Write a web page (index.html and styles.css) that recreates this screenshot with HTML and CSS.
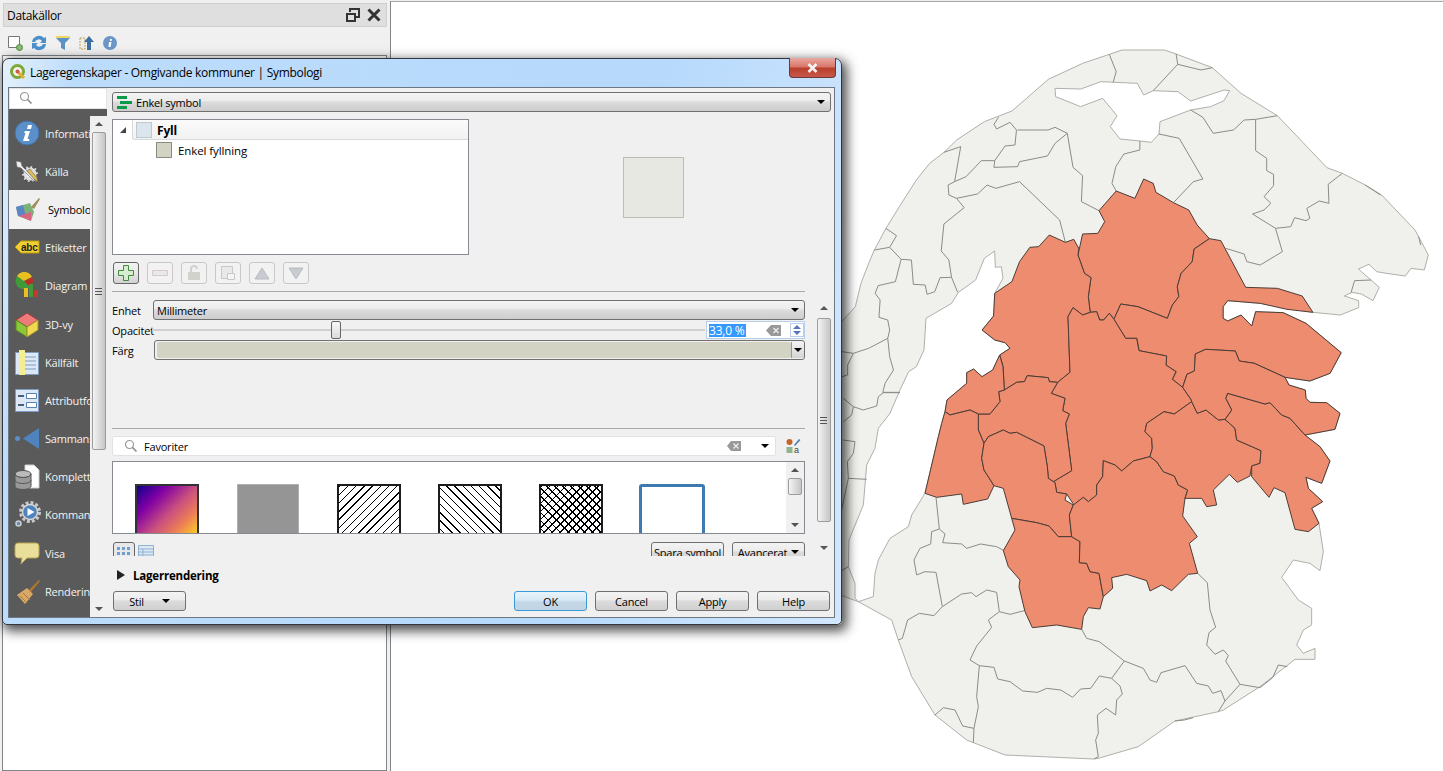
FILE: index.html
```html
<!DOCTYPE html>
<html lang="sv">
<head>
    <meta charset="UTF-8">
    <title>Lageregenskaper - Omgivande kommuner | Symbologi</title>
    <link rel="stylesheet" href="styles.css">
</head>
<body>

    <aside class="panel">
        <div class="panel-head">
            <span>Datakällor</span>
            <span class="panel-actions">
                <svg width="14" height="14" viewBox="0 0 14 14"><path d="M1 6h8v7H1zM1 6V8M4 4V1h9v8h-3" fill="none" stroke="#333" stroke-width="2"/></svg>
                <svg width="14" height="14" viewBox="0 0 14 14"><path d="M1.500 1.500l11 11M12.500 1.500l-11 11" stroke="#333" stroke-width="3"/></svg>
            </span>
        </div>
        <div class="panel-tools">
            <svg width="15" height="17" viewBox="0 0 15 17"><path d="M.5 2.500h11v11H.5z" fill="#fff" stroke="#777"/><circle cx="11.500" cy="13.500" r="3" fill="#8dbb78" stroke="#4c8a3c"/></svg>
            <svg width="16" height="16" viewBox="0 0 16 16"><path d="M1 7a7 7 0 0 1 12-4l2-1v6H9l2-2a4 4 0 0 0-7 1zM15 9a7 7 0 0 1-12 4l-2 1V8h6L5 10a4 4 0 0 0 7-1z" fill="#4b8fcb"/></svg>
            <svg width="16" height="16" viewBox="0 0 16 16"><path d="M1 1h14v2l-5 5v7l-4-2V8L1 3z" fill="#5d93c4"/><path d="M1 1h14v2H1z" fill="#f0d860"/></svg>
            <svg width="16" height="16" viewBox="0 0 16 16"><path d="M1 3h5v11H1z" fill="#eee" stroke="#c9a050" stroke-dasharray="2 1"/><path d="M10 1l5 6h-3v8H8V7H5z" fill="#3f6f9f"/></svg>
            <svg width="14" height="14" viewBox="0 0 14 14"><circle cx="7" cy="7" r="7" fill="#6a97c8"/><path d="M7 3h2L8.500 5H7zM6 6h2.500L7.500 11H5.500z" fill="#fff"/></svg>
        </div>
        <div class="panel-tree"></div>
    </aside>

    <main class="canvas">
        <svg class="map" width="1052" height="769" viewBox="391 2 1052 769">
            <g transform="translate(840 390) scale(.33333)">
                <path class="land" fill-rule="evenodd" d="M0-200 46-250 63-320 86-380 103-420 138-485 178-550 229-630 269-680 312-713 350-750 433-805 516-837 625-932 728-980 808-1007 846-1020 974-1020 1008-1008 1117-967 1203-890 1312-823 1461-667 1507-650 1576-615 1625-585 1725-480 1765-405 1753-360 1713-365 1696-342 1639-350 1610-355 1587-377 1555-363 1593-330 1618-308 1599-268 1564-288 1536-293 1513-282 1556-268 1556-247 1501-225 1419-233 1261-260 1163-268 1149-250 1149-215 1163-207 1203-225 1235-192 1247-235 1330-232 1398-200 1504-112 1470-50 1410-27 1335-38 1347-15 1396 0 1398 25 1410 37 1460 38 1500 70 1485 118 1395 135 1440 170 1470 213 1445 280 1398 262 1405 295 1448 335 1415 355 1437 400 1450 485 1440 542 1410 520 1360 510 1325 562 1375 630 1415 655 1415 705 1390 720 1370 765 1390 790 1425 775 1425 808 1365 808 1260 890 1150 960 1135 965 1005 993 895 1070 775 1105 760 1107 495 1095 380 1050 285 975 215 860 175 750 155 690 55 635 100 620 105 550 115 510 150 445 205 410 215 375 255 310 295 140 305 100 315 65 321 30 380-20 380-52 401-63 426-40 458-60 479-105 510-125 495-142 464-150 426-180 461-222 464-290 489-335 484-370 466-368 464-417 433-395 407-330 355-293 335-260 258-215 252-120 229-70 206-55 180 0 150 70 115 115 105 175 80 225 70 345 27 450 25 530 45 580 45 625 55 635 0 615zM645-905 722-903 783-925 892-920 911-885 940-898 1014-895 1052-867 1152-900 1169-898 1152-868 1112-850 1052-840 960-805 957-768 934-743 900-747 840-753 811-790 831-823 788-875 722-850 647-880z"/>

                <g class="borders">
                    <polyline points="180,8 130,8 115,20 110,48 70,60 40,50 10,25"/>
                    <polyline points="40,50 35,75 10,95"/>
                    <polyline points="10,150 45,155 40,190 22,215 25,265 5,360"/>
                    <polyline points="25,265 80,268"/>
                    <polyline points="0,545 25,530"/>
                    <polyline points="288,322 298,417 275,425 272,462 240,475 222,510 230,555 255,545 288,547 307,650"/>
                    <polyline points="298,417 315,432 308,458 365,462 380,475 422,462 470,470 492,482"/>
                    <polyline points="307,650 365,612 395,608 408,620 440,600 470,607 478,665 510,673 553,662"/>
                    <polyline points="307,650 282,677 238,670 203,690 187,745 175,750"/>
                    <polyline points="478,665 445,690 455,712 410,768 390,810 418,827 462,832 473,867 510,875 548,903 593,907 620,895 662,900 698,922 722,897 752,895 778,858 815,865 853,813"/>
                    <polyline points="725,718 740,745 778,755 853,813 910,835 930,870 950,877 963,848 1035,827 1070,880 1105,888 1118,910 1143,902 1155,933 1135,965"/>
                    <polyline points="815,865 840,888 847,912 830,930 827,975 798,955 772,975 775,1030 767,1050 775,1100 762,1107"/>
                    <polyline points="418,827 410,920 415,950 402,1015 400,1058"/>
                    <polyline points="402,1015 368,1008 345,960 310,953 285,975"/>
                    <polyline points="1073,550 1102,578 1110,660 1127,712 1107,728 1100,765 1125,793 1150,780 1165,797 1157,813 1200,883 1155,933"/>
                    <polyline points="1200,883 1260,893 1298,863 1315,825 1342,830"/>
                    <polyline points="1005,993 1033,990 1060,983"/>
                </g>

                <g transform="scale(1.146 1) translate(0 -1080)">
                    <g class="borders">
                        <polyline points="705,73 723,125 715,157"/>
                        <polyline points="880,72 884,103 820,182"/>
                        <polyline points="884,103 945,120 975,113"/>
                        <polyline points="918,240 950,262 977,310 1030,300 1058,270 1088,268 1145,257"/>
                        <polyline points="1088,268 1088,362 1117,385 1117,422 1135,433 1135,467 1110,500 1128,520 1110,540 1080,552 1140,595 1158,665 1100,705 1065,695 1058,672 1010,655"/>
                        <polyline points="1140,595 1180,590 1190,563 1220,572 1230,565 1222,535 1255,513 1280,520 1278,463 1315,430"/>
                        <polyline points="1375,465 1415,495"/>
                        <polyline points="1515,620 1520,645"/>
                        <polyline points="1338,787 1347,752 1390,750"/>
                        <polyline points="835,312 888,325 950,447 925,455 873,518"/>
                        <polyline points="785,333 785,360 743,372 722,410 712,460 723,483"/>
                        <polyline points="415,262 403,283 410,297 445,277 462,300 458,345 432,348 405,392 403,412 465,410 470,395 543,378 563,340 595,310 563,292 545,300 465,300"/>
                        <polyline points="595,310 610,412 635,437 632,515 678,542"/>
                        <polyline points="405,392 370,392 330,440 300,455 316,350 272,367"/>
                        <polyline points="300,455 283,465 285,495 305,505 360,492 385,465 408,475 470,455 575,570 590,637"/>
                        <polyline points="305,505 325,533 272,582 265,663 285,690 292,742 308,787"/>
                        <polyline points="292,742 262,743 248,785 228,793 223,765 192,763 187,690 160,688 130,652 90,660"/>
                        <polyline points="120,595 148,617 130,652"/>
                        <polyline points="160,688 145,755 100,767 92,790 105,810 102,862 125,870 130,900 125,925 75,955 35,970 5,965"/>
                        <polyline points="125,925 130,980 140,1020 118,1060 112,1087 155,1087"/>
                        <polyline points="35,970 20,1005 20,1035 5,1040"/>
                    </g>
                    <g class="selected">
                        <polygon points="723,483 772,505 795,447 820,460 827,487 873,518 913,540 935,585 967,626 927,657 922,695 893,730 883,770 887,800 870,825 857,865 780,830 735,822 717,868 705,850 690,870 680,870 672,845 655,847 650,800 657,743 640,730 623,675 635,612 675,610 693,575 678,542"/>
                        <polygon points="405,790 450,755 470,695 497,652 520,650 548,615 590,637 612,628 625,655 623,675 640,730 657,743 650,800 655,847 635,855 610,833 597,860 602,1027 570,1057 548,1055 545,1043 490,1037 483,1055 462,1057 430,1080 427,1010 418,975 445,955 432,938 405,930 372,900 402,858"/>
                        <polygon points="967,626 997,632 1062,772 1145,775 1210,798 1238,847 1170,838 1100,820 1015,812 1003,830 1003,865 1015,873 1050,855 1078,888 1088,845 1160,848 1220,880 1312,968 1283,1030 1230,1053 1165,1042 1085,1000 1045,993 1035,963 957,958 930,972 928,1023 908,1033 897,1072 870,1048 880,1025 853,1005 855,978 783,962 777,925 748,925 717,868 735,822 780,830 857,865 870,825 887,800 883,770 893,730 922,695 927,657"/>
                    </g>
                </g>

                <g class="selected">
                    <polygon points="684,-220 699,-247 728,-225 751,-233 770,-235 779,-210 791,-210 808,-230 822,-212 857,-155 890,-155 897,-118 980,-102 978,-75 1008,-55 997,-32 1028,-8 1054,30 1055,35 1003,72 972,65 920,100 915,125 935,145 937,175 930,200 880,213 845,243 825,225 790,212 788,260 770,285 770,315 745,335 730,322 702,345 680,312 650,307 645,278 640,275 695,242 677,100 688,72 668,62 675,25 634,10 653,-23 690,-53"/>
                    <polygon points="493,0 530,-23 553,-25 562,-43 625,-37 628,-25 653,-23 634,10 675,25 668,62 688,72 677,100 695,242 640,275 625,265 622,230 612,168 530,127 510,130 490,120 445,140 432,160 415,120 415,72 450,72 480,35 476,5"/>
                    <polygon points="315,65 330,75 390,60 415,72 450,72 480,35 476,5 493,0 489,-70 479,-105 458,-60 426,-40 401,-63 380,-52 380,-20 321,30"/>
                    <polygon points="255,310 290,322 365,312 370,343 443,327 462,287 432,240 425,205 432,160 415,120 415,72 390,60 330,75 315,65 305,100 295,140"/>
                    <polygon points="432,160 445,140 490,120 510,130 530,127 612,168 622,230 625,265 640,275 645,278 650,307 680,312 675,330 700,345 688,375 695,440 655,440 627,408 590,398 515,385 490,295 462,287 432,240 425,205"/>
                    <polygon points="515,385 590,398 627,408 655,440 695,440 720,455 718,518 740,520 750,545 777,550 790,620 780,657 745,653 730,680 725,718 650,705 577,713 555,665 537,590 540,570 505,530 490,482 525,420"/>
                    <polygon points="700,345 730,322 745,335 770,315 770,285 788,260 790,212 825,225 845,243 880,213 930,200 950,215 970,245 1003,258 1015,285 1043,300 1035,325 1028,378 1072,440 1048,460 1073,550 1045,553 995,602 965,585 930,603 920,572 860,553 815,563 818,595 790,620 777,550 750,545 740,520 718,518 720,455 695,440 688,375"/>
                    <polygon points="1055,35 1072,70 1098,60 1135,90 1155,88 1185,115 1190,150 1263,182 1260,220 1235,228 1230,258 1192,277 1168,253 1120,300 1130,345 1100,350 1085,325 1035,325 1043,300 1015,285 1003,258 970,245 950,215 930,200 937,175 935,145 915,125 920,100 972,65 1003,72"/>
                    <polygon points="1155,88 1175,60 1157,25 1163,10 1275,42 1290,38 1325,75 1350,85 1395,135 1440,170 1470,213 1445,280 1398,262 1405,295 1448,335 1415,355 1437,400 1405,425 1365,418 1335,308 1302,293 1287,322 1235,260 1235,228 1260,220 1263,182 1190,150 1185,115"/>
                    <polygon points="1028,-8 1041,-47 1063,-57 1066,-108 1097,-122 1186,-117 1198,-87 1243,-80 1335,-38 1347,-15 1396,0 1398,25 1410,37 1460,38 1500,70 1485,118 1395,135 1350,85 1325,75 1290,38 1275,42 1163,10 1157,25 1175,60 1155,88 1135,90 1098,60 1072,70 1055,35 1054,30"/>
                </g>
            </g>
        </svg>
    </main>

    <div class="dialog">
        <div class="dialog-title">
            <svg width="18" height="18" viewBox="0 0 18 18"><circle cx="8.500" cy="8.500" r="6" fill="#f4f4e8" stroke="#7fa83c" stroke-width="3"/><path d="M9 9l6 6" stroke="#e0b030" stroke-width="3"/><circle cx="8.500" cy="8.500" r="2" fill="#d05a4a"/></svg>
            <span class="dialog-name">Lageregenskaper - Omgivande kommuner | Symbologi</span>
            <span class="close-btn">
                <svg width="11" height="10" viewBox="0 0 11 10"><path d="M1.500 1l8 8M9.500 1l-8 8" stroke="#f2f2f2" stroke-width="2.600"/></svg>
            </span>
        </div>

        <div class="dialog-body">
            <div class="side">
                <div class="side-search">
                    <svg width="14" height="14" viewBox="0 0 14 14"><circle cx="5.500" cy="5.500" r="4" fill="none" stroke="#999" stroke-width="1.200"/><path d="M8.500 8.500l4 4" stroke="#888" stroke-width="1.600"/></svg>
                </div>
                <div class="side-row">
                    <ul class="side-list">
                        <li>
                            <svg width="27" height="27" viewBox="0 0 27 27"><circle cx="13" cy="13" r="12" fill="#5b8fc9" stroke="#3e6fa5"/><path d="M14 5h4l-1 4h-4zM11 11h5l-2.500 8h2l-.5 2H9l2.500-8H10z" fill="#fff"/></svg>
                            <span>Information</span>
                        </li>
                        <li>
                            <svg width="27" height="27" viewBox="0 0 27 27"><circle cx="16" cy="16" r="8" fill="#ddd" stroke="#555" stroke-width="3" stroke-dasharray="3 2"/><circle cx="16" cy="16" r="4" fill="#eee"/><path d="M2 3l5 1 1 4 12 12 3 4-4-2L7 10l-4-1z" fill="#eee" stroke="#666" stroke-width=".6"/><path d="M13 13l8 9 3 2-1-4-7-9z" fill="#e0c050" stroke="#555" stroke-width=".6"/></svg>
                            <span>Källa</span>
                        </li>
                        <li class="is-active">
                            <svg width="27" height="27" viewBox="0 0 27 27"><path d="M2 11l14-4 4 9-3 9-13-5z" fill="#7cb27a"/><path d="M2 11l7-2 3 12-8-1z" fill="#5a86c8"/><path d="M5 20l12-4 0 9z" fill="#d8657f"/><path d="M17 11l8-9 1 1-6 10z" fill="#a08d5a"/></svg>
                            <span>Symbologi</span>
                        </li>
                        <li>
                            <svg width="27" height="27" viewBox="0 0 27 27"><path d="M1 13l6-6h18v12H7z" fill="#f0cf30" stroke="#b89a10"/><text x="7" y="17" class="abc">abc</text></svg>
                            <span>Etiketter</span>
                        </li>
                        <li>
                            <svg width="27" height="27" viewBox="0 0 27 27"><circle cx="10" cy="9" r="8.500" fill="#3f9a3a"/><path d="M10 9L3 4a8.500 8.500 0 0 1 15 1z" fill="#e8c020"/><path d="M10 9l8-4a8.500 8.500 0 0 1-2 10z" fill="#b8302a"/><path d="M10 16h4v9h-4z" fill="#e8c020"/><path d="M15 12h4v13h-4z" fill="#3f9a3a"/><path d="M20 18h4v7h-4z" fill="#c03a30"/></svg>
                            <span>Diagram</span>
                        </li>
                        <li>
                            <svg width="27" height="27" viewBox="0 0 27 27"><path d="M13 2l11 7-11 7-11-7z" fill="#ee7a7a" stroke="#a03a3a"/><path d="M2 9l11 7v10L2 19z" fill="#8cc83a" stroke="#5a8a20"/><path d="M24 9l-11 7v10l11-7z" fill="#f0d850" stroke="#a8922a"/></svg>
                            <span>3D-vy</span>
                        </li>
                        <li>
                            <svg width="27" height="27" viewBox="0 0 27 27"><path d="M1.500 3.500h23v22h-23z" fill="#dce8f5" stroke="#7f9dc0"/><path d="M11 8h11M11 12h11M11 16h11M11 20h11" stroke="#7f9dc0"/><path d="M5 1h6v25H5z" fill="#f5ee90"/></svg>
                            <span>Källfält</span>
                        </li>
                        <li>
                            <svg width="27" height="27" viewBox="0 0 27 27"><path d="M1.500 2.500h23v22h-23z" fill="#dce8f5" stroke="#7f9dc0"/><path d="M12.500 6.500h10v5h-10zM12.500 15.500h10v5h-10z" fill="#fff" stroke="#5a82b0"/><path d="M4 9h6M4 18h6" stroke="#4a5f78" stroke-width="2"/></svg>
                            <span>Attributformulär</span>
                        </li>
                        <li>
                            <svg width="27" height="27" viewBox="0 0 27 27"><circle cx="3.500" cy="13.500" r="2.500" fill="#5b8fc9"/><path d="M25 3v21L9 13.500z" fill="#4f83bd"/></svg>
                            <span>Sammanslagning</span>
                        </li>
                        <li>
                            <svg width="27" height="27" viewBox="0 0 27 27"><path d="M11 2h9l5 5v18H11z" fill="#fff" stroke="#ccc"/><ellipse cx="9" cy="11" rx="8" ry="3.500" fill="#bbb" stroke="#555"/><path d="M1 11v12c0 2 3.500 3.500 8 3.500s8-1.500 8-3.500V11c0 2-3.500 3.500-8 3.500S1 13 1 11z" fill="#999" stroke="#555"/><path d="M1 17c0 2 3.500 3.500 8 3.500s8-1.500 8-3.500" fill="none" stroke="#555"/></svg>
                            <span>Kompletterande</span>
                        </li>
                        <li>
                            <svg width="27" height="27" viewBox="0 0 27 27"><circle cx="16" cy="11" r="9.500" fill="none" stroke="#c8c8c8" stroke-width="3" stroke-dasharray="3 2"/><circle cx="16" cy="11" r="7.500" fill="#4f83bd" stroke="#d8d8d8" stroke-width="1.500"/><path d="M13.500 7l7 4-7 4z" fill="#fff"/><circle cx="4.500" cy="22.500" r="2.500" fill="#5b8fc9" stroke="#ccc" stroke-width="1.500"/></svg>
                            <span>Kommando</span>
                        </li>
                        <li>
                            <svg width="27" height="27" viewBox="0 0 27 27"><path d="M4 3h18q3 0 3 3v9q0 3-3 3H13l-6 6 1-6H4q-3 0-3-3V6q0-3 3-3z" fill="#eadf9a" stroke="#b8a650"/></svg>
                            <span>Visa</span>
                        </li>
                        <li>
                            <svg width="27" height="27" viewBox="0 0 27 27"><path d="M25 2L15 12l2 2L26 3z" fill="#b07a2a"/><path d="M3 17l10-7 6 6-8 10z" fill="#d8a868"/><path d="M6 18l7 7M9 15l7 7" stroke="#a87a3a"/></svg>
                            <span>Rendering</span>
                        </li>
                    </ul>
                    <div class="scroll side-scroll">
                        <i class="tick-up"></i>
                        <div class="thumb side-thumb"><b class="grip"></b></div>
                        <i class="tick-down"></i>
                    </div>
                </div>
            </div>

            <div class="main-col">
                <div class="combo renderer">
                    <svg width="17" height="15" viewBox="0 0 17 15"><path d="M1 1h10v3H1zM4 6h12v3H4zM1 11h10v3H1z" fill="#0a9a4a"/></svg>
                    <span>Enkel symbol</span>
                    <i class="arrow"></i>
                </div>

                <div class="symbol-row">
                    <div class="layer-tree">
                        <div class="tree-head">
                            <i class="twist"></i>
                            <div class="tree-bar">
                                <span class="tree-box tree-box-fyll"></span>
                                <strong>Fyll</strong>
                            </div>
                        </div>
                        <div class="tree-child">
                            <span class="tree-box tree-box-simple"></span>
                            <span>Enkel fyllning</span>
                        </div>
                    </div>
                    <div class="preview-wrap"><div class="preview"></div></div>
                </div>

                <div class="layer-tools">
                    <span class="tool on"><svg width="18" height="18" viewBox="0 0 18 18"><path d="M6.500 1.500h5v5h5v5h-5v5h-5v-5h-5v-5h5z" fill="#d8ecd0" stroke="#3f8a3f"/></svg></span>
                    <span class="tool"><svg width="18" height="8" viewBox="0 0 18 8"><path d="M1.500 1.500h15v5h-15z" fill="#e8e8e8" stroke="#d8c8c8"/></svg></span>
                    <span class="tool"><svg width="14" height="16" viewBox="0 0 14 16"><path d="M1 7h12v8H1z" fill="#d2d2cc"/><path d="M4 7V4a3 3 0 0 1 6 0" fill="none" stroke="#d2d2cc" stroke-width="2"/></svg></span>
                    <span class="tool"><svg width="14" height="14" viewBox="0 0 14 14"><path d="M.500.500h11v12h-11z" fill="#e8e8e8" stroke="#c8c8c8"/><path d="M6.500 7.500h7v6h-7z" fill="#f4f4f4" stroke="#c8c8c8"/></svg></span>
                    <span class="tool"><svg width="16" height="13" viewBox="0 0 16 13"><path d="M8 1l7 11H1z" fill="#c8ccd0" stroke="#b8bcc0"/></svg></span>
                    <span class="tool"><svg width="16" height="13" viewBox="0 0 16 13"><path d="M8 12L15 1H1z" fill="#c8ccd0" stroke="#b8bcc0"/></svg></span>
                </div>
                <div class="sep"></div>

                <div class="settings">
                    <div class="settings-inner">
                        <div class="form-grid">
                            <label>Enhet</label>
                            <div class="combo unit"><span>Millimeter</span><i class="arrow"></i></div>
                            <label>Opacitet</label>
                            <div class="opacity">
                                <div class="slider"><i class="slider-handle"></i></div>
                                <div class="spin">
                                    <span class="spin-text">33,0 %</span>
                                    <svg width="15" height="11" viewBox="0 0 15 11"><path d="M5 0h10v11H5L0 5.500z" fill="#999"/><path d="M7.500 3l5 5M12.500 3l-5 5" stroke="#eee" stroke-width="1.300"/></svg>
                                    <span class="spin-btns"><i class="up"></i><i class="down"></i></span>
                                </div>
                            </div>
                            <label>Färg</label>
                            <div class="color-btn"><span class="color-fill"></span><span class="color-drop"><i class="arrow"></i></span></div>
                        </div>

                        <div class="sep sep-lib"></div>

                        <div class="lib-search">
                            <div class="lib-field">
                                <svg width="14" height="14" viewBox="0 0 14 14"><circle cx="5.500" cy="5.500" r="4" fill="none" stroke="#999" stroke-width="1.200"/><path d="M8.500 8.500l4 4" stroke="#888" stroke-width="1.600"/></svg>
                                <span>Favoriter</span>
                                <svg class="lib-clear" width="14" height="10" viewBox="0 0 14 10"><path d="M4 0h10v10H4L0 5z" fill="#999"/><path d="M6.500 2.500l5 5M11.500 2.500l-5 5" stroke="#eee" stroke-width="1.300"/></svg>
                                <i class="arrow"></i>
                            </div>
                            <svg width="16" height="16" viewBox="0 0 16 16"><circle cx="4.500" cy="4" r="3" fill="#c8642a"/><path d="M1.500 9h6v6h-6z" fill="#8fb58f"/><path d="M9 7l5-6 1.500 1L10 8z" fill="#4a7fb0"/><text x="9" y="15" class="mini-a">a</text></svg>
                        </div>

                        <div class="lib-list">
                            <div class="tiles">
                                <div class="tile tile-grad"></div>
                                <div class="tile tile-grey"></div>
                                <div class="tile tile-hatch-a"></div>
                                <div class="tile tile-hatch-b"></div>
                                <div class="tile tile-cross"></div>
                                <div class="tile tile-outline"></div>
                            </div>
                            <div class="scroll lib-scroll">
                                <i class="tick-up"></i>
                                <div class="thumb lib-thumb"></div>
                                <i class="tick-down"></i>
                            </div>
                        </div>

                        <div class="lib-foot">
                            <span class="view-btn on"><svg width="16" height="12" viewBox="0 0 16 12"><path d="M1 1h3v3H1zM6 1h3v3H6zM11 1h3v3h-3zM1 6h3v3H1zM6 6h3v3H6zM11 6h3v3h-3z" fill="#6f9fd0"/></svg></span>
                            <span class="view-btn"><svg width="16" height="14" viewBox="0 0 16 14"><path d="M.500.500h15v13H.500z" fill="#dce8f5" stroke="#8fb0d0"/><path d="M1 4h14M1 7h14M1 10h14M5 4v9" stroke="#8fb0d0"/></svg></span>
                            <span class="foot-spacer"></span>
                            <span class="btn small">Spara symbol</span>
                            <span class="btn small">Avancerat <i class="arrow"></i></span>
                        </div>
                    </div>
                    <div class="scroll outer-scroll">
                        <i class="tick-up"></i>
                        <div class="thumb outer-thumb"><b class="grip"></b></div>
                        <i class="tick-down"></i>
                    </div>
                </div>

                <div class="rendering-row">
                    <i class="expand"></i>
                    <strong>Lagerrendering</strong>
                </div>

                <div class="footer">
                    <span class="btn stil">Stil <i class="arrow"></i></span>
                    <span class="foot-spacer"></span>
                    <span class="btn primary">OK</span>
                    <span class="btn">Cancel</span>
                    <span class="btn">Apply</span>
                    <span class="btn">Help</span>
                </div>
            </div>
        </div>
    </div>

</body>
</html>
```

FILE: styles.css
```css
* {
    margin: 0;
    padding: 0;
    box-sizing: border-box;
}

body {
    width: 1443px;
    height: 771px;
    overflow: hidden;
    position: relative;
    display: flex;
    background-color: #f0f0f0;
    font-family: "Open Sans", sans-serif;
    font-size: 11px;
    letter-spacing: -0.2px;
    color: #000;
}

/* left dock */
.panel {
    width: 387px;
    height: 771px;
    margin-left: 2px;
    display: flex;
    flex-direction: column;
}

.panel-head {
    width: 384px;
    height: 24px;
    margin-top: 3px;
    margin-left: 1px;
    padding: 0 5px 0 3px;
    display: flex;
    align-items: center;
    justify-content: space-between;
    background-color: #dfdfdf;
    border: 1px solid #cfcfcf;
    font-size: 12px;
    letter-spacing: -0.3px;
}

.panel-actions {
    display: flex;
    gap: 7px;
}

.panel-tools {
    height: 28px;
    padding: 3px 0 0 6px;
    display: flex;
    align-items: center;
    gap: 8px;
}

.panel-tree {
    flex: 1;
    width: 385px;
    background-color: #fff;
    border: 1px solid #7f8589;
}

/* map */
.canvas {
    flex: 1;
    margin: 1px 0 0 1px;
    background-color: #fff;
    border-top: 1px solid #a8a8a8;
    border-left: 1px solid #7f8589;
}

.map {
    display: block;
}

.land {
    fill: #f0f1ec;
    stroke: #aeb0aa;
    stroke-width: 1;
    vector-effect: non-scaling-stroke;
}

.borders polyline {
    fill: none;
    stroke: #8a8c86;
    stroke-width: 1;
    vector-effect: non-scaling-stroke;
}

.selected polygon {
    fill: #ed8c6e;
    stroke: #4d3c36;
    stroke-width: 1;
    vector-effect: non-scaling-stroke;
}

/* dialog window */
.dialog {
    position: absolute;
    left: 2px;
    top: 58px;
    width: 840px;
    height: 567px;
    display: flex;
    flex-direction: column;
    padding: 0 6px 6px 5px;
    background: linear-gradient(100deg, #e4f1fb 0, #bcdcfb 8%, #b6d9fc 70%, #d2e7fe 100%);
    border: 1px solid #30363c;
    border-radius: 7px 7px 5px 5px;
    box-shadow: 3px 4px 12px 2px rgba(0, 0, 0, 0.7);
}

.dialog-title {
    height: 28px;
    flex: none;
    display: flex;
    align-items: center;
    gap: 3px;
    padding: 0 0 2px 1px;
    position: relative;
    font-size: 12px;
    letter-spacing: -0.3px;
}

.close-btn {
    position: absolute;
    right: -1px;
    top: -1px;
    width: 47px;
    height: 20px;
    display: flex;
    align-items: center;
    justify-content: center;
    background: linear-gradient(#eaa9a2 0, #d8776c 45%, #b8402e 55%, #c9584a 100%);
    border: 1px solid #6a3a38;
    border-top: none;
    border-radius: 0 0 4px 4px;
}

.dialog-body {
    flex: 1;
    display: flex;
    gap: 5px;
    background-color: #f0f0f0;
    border: 1px solid #6d7882;
    min-height: 0;
}

/* sidebar */
.side {
    width: 98px;
    display: flex;
    flex-direction: column;
}

.side-search {
    height: 21px;
    padding: 2px 0 0 9px;
    background-color: #fff;
    border: 1px solid #e4e4e4;
    flex: none;
}

.side-row {
    flex: 1;
    display: flex;
    min-height: 0;
    background: linear-gradient(#5a5a5a 0, #5a5a5a 7px, #f0f0f0 7px);
}

.side-list {
    width: 81px;
    list-style: none;
    background-color: #5a5a5a;
    overflow: hidden;
    padding-top: 5px;
}

.side-list li {
    height: 38.2px;
    padding-left: 5px;
    display: flex;
    align-items: center;
    gap: 4px;
    white-space: nowrap;
    color: #f2f2f2;
}

.side-list svg {
    flex: none;
}

.side-list .is-active {
    background-color: #f0f0f0;
    color: #000;
    gap: 7px;
}

.abc {
    font-family: "Liberation Sans", sans-serif;
    font-size: 10px;
    font-weight: bold;
    fill: #222;
}

.mini-a {
    font-family: "Liberation Sans", sans-serif;
    font-size: 9px;
    fill: #444;
}

/* scrollbars */
.scroll {
    width: 17px;
    display: flex;
    flex-direction: column;
    align-items: center;
    background-color: #f0f0f0;
    position: relative;
}

.side-scroll {
    margin-top: 7px;
}

.tick-up,
.tick-down {
    display: block;
    width: 0;
    height: 0;
    flex: none;
    border-left: 4px solid transparent;
    border-right: 4px solid transparent;
}

.tick-up {
    margin: 6px 0;
    border-bottom: 4px solid #555;
}

.tick-down {
    margin: auto 0 6px;
    border-top: 4px solid #555;
}

.thumb {
    width: 14px;
    display: flex;
    align-items: center;
    justify-content: center;
    background: linear-gradient(90deg, #f4f4f4, #dcdcdc 50%, #c6c6c6);
    border: 1px solid #9c9c9c;
    border-radius: 2px;
}

.side-thumb {
    height: 318px;
}

.outer-thumb {
    height: 204px;
    margin-top: 2px;
}

.lib-thumb {
    height: 17px;
}

.grip {
    width: 7px;
    height: 7px;
    border-top: 1px solid #555;
    border-bottom: 1px solid #555;
    background: linear-gradient(#555, #555) center / 100% 1px no-repeat;
}

/* main column */
.main-col {
    width: 720px;
    display: flex;
    flex-direction: column;
    padding-top: 4px;
}

.combo {
    height: 20px;
    display: flex;
    align-items: center;
    gap: 3px;
    padding: 0 3px;
    background: linear-gradient(#f3f3f3 0, #ececec 42%, #dcdcdc 50%, #cdcdcd 100%);
    border: 1px solid #707070;
    border-radius: 3px;
}

.renderer {
    width: 719px;
    flex: none;
}

.arrow {
    display: inline-block;
    width: 0;
    height: 0;
    margin-left: auto;
    margin-right: 2px;
    border-left: 4px solid transparent;
    border-right: 4px solid transparent;
    border-top: 4px solid #000;
}

.symbol-row {
    height: 136px;
    margin-top: 7px;
    display: flex;
    flex: none;
}

.layer-tree {
    width: 357px;
    background-color: #fff;
    border: 1px solid #858b90;
}

.tree-head {
    height: 20px;
    display: flex;
    align-items: center;
    padding-left: 7px;
}

.tree-bar {
    flex: 1;
    height: 20px;
    display: flex;
    align-items: center;
    padding: 1px 0 0 3px;
    background: linear-gradient(#fbfbfb, #f2f2f2);
    border: 1px solid #d8d8d8;
    border-top: none;
    border-right: none;
    border-radius: 0 0 0 3px;
}

.tree-bar strong {
    margin-left: 5px;
    font-size: 12px;
}

.twist {
    flex: none;
    width: 0;
    height: 0;
    margin-right: 6px;
    border-left: 6px solid transparent;
    border-bottom: 6px solid #444;
}

.tree-box {
    display: block;
    flex: none;
    width: 16px;
    height: 16px;
    border: 1px solid #aaa;
}

.tree-box-fyll {
    background-color: #dbe5ee;
    border-color: #c0c8d0;
}

.tree-box-simple {
    background-color: #d2d3c3;
    border-color: #8a8a80;
}

.tree-child {
    display: flex;
    align-items: center;
    gap: 6px;
    height: 20px;
    padding-left: 43px;
    font-size: 11.5px;
    letter-spacing: -0.1px;
}

.preview-wrap {
    flex: 1;
    display: flex;
    padding: 38px 0 0 154px;
}

.preview {
    width: 61px;
    height: 61px;
    background-color: #e8e8e2;
    border: 1px solid #bdbdb8;
}

.layer-tools {
    height: 22px;
    margin-top: 7px;
    padding-left: 1px;
    display: flex;
    gap: 8px;
    flex: none;
}

.tool {
    width: 26px;
    height: 22px;
    display: flex;
    align-items: center;
    justify-content: center;
    background-color: #f2f2f2;
    border: 1px solid #c8c8c8;
    border-radius: 3px;
}

.tool.on {
    background: linear-gradient(#f2f2f2 0, #e8e8e8 50%, #d2d2d2 100%);
    border-color: #666;
}

.sep {
    width: 693px;
    height: 1px;
    flex: none;
    margin-top: 7px;
    background-color: #a8a8a8;
}

.settings {
    height: 256px;
    margin-top: 8px;
    display: flex;
    flex: none;
    overflow: hidden;
}

.settings-inner {
    width: 693px;
}

.form-grid {
    display: grid;
    grid-template-columns: 41px 1fr;
    grid-template-rows: 20px 20px 20px;
    align-items: center;
}

.unit {
    height: 20px;
}

.opacity {
    display: flex;
    align-items: center;
    height: 20px;
}

.slider {
    width: 553px;
    height: 2px;
    position: relative;
    background-color: #d0d0d0;
    margin-left: -1px;
}

.slider-handle {
    position: absolute;
    left: 179px;
    top: -8px;
    width: 10px;
    height: 18px;
    background: linear-gradient(#f6f6f6, #dcdcdc);
    border: 1px solid #666;
    border-radius: 2px;
}

.spin {
    width: 99px;
    height: 18px;
    margin-left: 1px;
    display: flex;
    align-items: center;
    background-color: #fff;
    border: 1px solid #b7cfe8;
    padding-left: 2px;
}

.spin-text {
    width: 57px;
    font-size: 12px;
    line-height: 13px;
    background: linear-gradient(90deg, #3399ff 37px, transparent 37px);
    color: #fff;
}

.spin-btns {
    display: flex;
    flex-direction: column;
    gap: 2px;
    margin-left: 9px;
    width: 14px;
    align-items: center;
    border: 1px solid #b7cfe8;
    height: 14px;
    justify-content: center;
}

.spin-btns i {
    width: 0;
    height: 0;
    border-left: 4px solid transparent;
    border-right: 4px solid transparent;
}

.spin-btns .up {
    border-bottom: 4px solid #5b74b8;
}

.spin-btns .down {
    border-top: 4px solid #5b74b8;
}

.color-btn {
    height: 20px;
    margin-left: 1px;
    display: flex;
    border: 1px solid #707070;
    border-radius: 3px;
    background-color: #f0f0f0;
    padding: 1px 0 1px 2px;
}

.color-fill {
    flex: 1;
    background-color: #d2d3c3;
    border-radius: 2px;
}

.color-drop {
    width: 13px;
    display: flex;
    align-items: center;
    border-left: 1px solid #999;
    background: linear-gradient(#f2f2f2, #d4d4d4);
}

.color-drop .arrow {
    margin: 0 auto;
}

.sep-lib {
    margin-top: 68px;
}

.lib-search {
    margin-top: 7px;
    display: flex;
    align-items: center;
    gap: 9px;
}

.lib-field {
    width: 664px;
    height: 20px;
    display: flex;
    align-items: center;
    padding: 0 4px 0 11px;
    gap: 6px;
    background-color: #fff;
    border: 1px solid #e2e2e2;
    border-radius: 2px;
}

.lib-clear {
    margin-left: auto;
    margin-right: 14px;
}

.lib-field .arrow {
    margin: 0 2px 0 0;
}

.lib-list {
    height: 73px;
    margin-top: 5px;
    display: flex;
    background-color: #fff;
    border: 1px solid #858b90;
    overflow: hidden;
}

.tiles {
    flex: 1;
    display: flex;
    gap: 37px;
    padding: 22px 0 0 22px;
}

.tile {
    flex: none;
    width: 64px;
    height: 64px;
    border: 2px solid #1c1c1c;
}

.tile-grad {
    background: linear-gradient(135deg, #10008c 0, #8000a4 25%, #c94f80 50%, #ee7f55 70%, #ffd81e 92%);
    border-color: #333;
}

.tile-grey {
    margin: 0 1px;
    width: 62px;
    background-color: #959595;
    border: 1px solid #b0b0b0;
}

.tile-hatch-a {
    background: repeating-linear-gradient(135deg, #000 0, #000 1.1px, #fff 1.1px, #fff 5.8px);
}

.tile-hatch-b {
    background: repeating-linear-gradient(45deg, #000 0, #000 1.1px, #fff 1.1px, #fff 5.8px);
}

.tile-cross {
    background:
        repeating-linear-gradient(45deg, #000 0, #000 1.2px, transparent 1.2px, transparent 5.7px),
        repeating-linear-gradient(135deg, #000 0, #000 1.2px, #fff 1.2px, #fff 5.7px);
}

.tile-outline {
    width: 66px;
    margin-left: -1px;
    border: 3px solid #3d7ab0;
    border-radius: 3px;
}

.lib-scroll {
    width: 18px;
}

.lib-foot {
    height: 20px;
    margin-top: 8px;
    display: flex;
    gap: 8px;
    padding-left: 1px;
}

.view-btn {
    width: 22px;
    height: 20px;
    display: flex;
    justify-content: center;
    padding-top: 3px;
    border-radius: 3px;
    margin-right: -8px;
}

.view-btn.on {
    background-color: #e8e8e8;
    border: 1px solid #666;
}

.foot-spacer {
    flex: 1;
}

.btn {
    width: 73px;
    height: 20px;
    display: flex;
    align-items: center;
    justify-content: center;
    gap: 4px;
    background: linear-gradient(#f3f3f3 0, #ececec 42%, #dcdcdc 50%, #cfcfcf 100%);
    border: 1px solid #707070;
    border-radius: 3px;
}

.btn .arrow {
    margin: 0;
}

.btn.small {
    white-space: nowrap;
}

.outer-scroll {
    margin-left: 10px;
}

.rendering-row {
    height: 20px;
    margin-top: 9px;
    padding-left: 5px;
    display: flex;
    align-items: center;
    gap: 8px;
    flex: none;
}

.rendering-row strong {
    font-size: 11.5px;
}

.expand {
    width: 0;
    height: 0;
    border-top: 5px solid transparent;
    border-bottom: 5px solid transparent;
    border-left: 8px solid #222;
}

.footer {
    height: 20px;
    margin-top: 6px;
    padding: 0 2px 0 1px;
    display: flex;
    gap: 8px;
    flex: none;
}

.stil {
    gap: 18px;
}

.btn.primary {
    background: linear-gradient(#e8f4fc 0, #d8e8f4 45%, #c4d8e6 55%, #c0d4e4 100%);
    border: 1px solid #3a9ad8;
}
```
